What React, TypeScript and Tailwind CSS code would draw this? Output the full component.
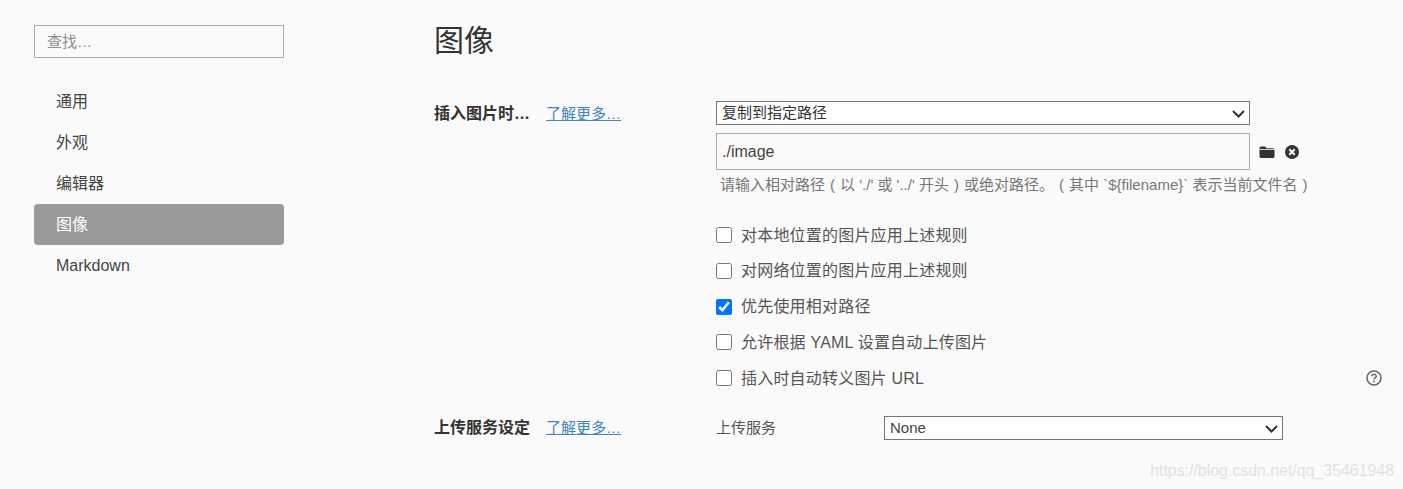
import React from "react";

const font = { fontFamily: '"Liberation Sans", "Noto Sans CJK SC", sans-serif' };

const nav = ["通用", "外观", "编辑器", "图像", "Markdown"];
const checks: [string, boolean][] = [
  ["对本地位置的图片应用上述规则", false],
  ["对网络位置的图片应用上述规则", false],
  ["优先使用相对路径", true],
  ["允许根据 YAML 设置自动上传图片", false],
  ["插入时自动转义图片 URL", false],
];

function Folder() {
  return (
    <svg width="16" height="14" viewBox="0 0 16 14" className="block">
      <path d="M0.5 3 Q0.5 1.5 2 1.5 H6 L7.5 3.2 H14 Q15.5 3.2 15.5 4.7 V11.5 Q15.5 13 14 13 H2 Q0.5 13 0.5 11.5 Z" fill="#333" />
      <rect x="0.5" y="4.2" width="15" height="0.8" fill="#fafafa" />
    </svg>
  );
}

function CloseCircle() {
  return (
    <svg width="14" height="14" viewBox="0 0 14 14" className="block">
      <circle cx="7" cy="7" r="7" fill="#333" />
      <path d="M4.3 4.3 L9.7 9.7 M9.7 4.3 L4.3 9.7" stroke="#fafafa" strokeWidth="2.2" />
    </svg>
  );
}

function Help() {
  return (
    <svg width="16" height="16" viewBox="0 0 16 16" className="block" fill="none">
      <circle cx="8" cy="8" r="7" stroke="#666" strokeWidth="1.5" />
      <path d="M5.9 6.3 C5.9 3.6 10.2 3.7 10.2 6.2 C10.2 7.8 8 7.8 8 9.5" stroke="#666" strokeWidth="1.5" />
      <circle cx="8" cy="11.5" r="0.9" fill="#666" />
    </svg>
  );
}

function Chevron() {
  return (
    <svg width="13" height="8" viewBox="0 0 13 8" fill="none" className="pointer-events-none absolute top-[9px] right-[5px]">
      <path d="M1 1 L6.5 6.5 L12 1" stroke="#333" strokeWidth="2" />
    </svg>
  );
}

function Learn() {
  return <a className="text-[15px] leading-[20px] text-[#4183c4] underline" href="#">了解更多…</a>;
}

function Paren({ c }: { c: string }) {
  return <span className="inline-block w-[1em] text-center">{c}</span>;
}

export default function App() {
  return (
    <div className="relative flex h-[489px] w-[1403px] overflow-hidden bg-[#fafafa] text-[#333]" style={font}>
      <aside className="ml-[34px] w-[250px] shrink-0 pt-[25px]">
        <input
          readOnly
          placeholder="查找…"
          className="block h-[33px] w-full border border-[#aaa] bg-[#fafafa] px-3 text-[15px] outline-none placeholder:text-[#8a8a8a]"
        />
        <ul className="mt-[23px]">
          {nav.map((n) => (
            <li
              key={n}
              className={
                "flex h-[41px] items-center rounded-[4px] pl-[22px] text-[16px] " +
                (n === "图像" ? "bg-[#999] text-white" : "text-[#444]")
              }
            >
              {n}
            </li>
          ))}
        </ul>
      </aside>

      <main className="ml-[150px] flex-1 pr-[20px]">
        <h1 className="mt-[21px] h-[40px] text-[30px] leading-[40px] font-normal text-[#333]">图像</h1>

        <section className="mt-[40px] flex">
          <div className="flex h-[24px] w-[282px] shrink-0 items-center pt-[1px]">
            <span className="w-[112px] text-[16px] font-bold text-[#333]">插入图片时…</span>
            <Learn />
          </div>
          <div className="flex-1">
            <div className="relative w-[534px]">
              <select className="block h-[24px] w-full appearance-none border border-[#767676] bg-white pl-[5px] text-[15px] text-[#333]">
                <option>复制到指定路径</option>
              </select>
              <Chevron />
            </div>
            <div className="mt-[8px] flex items-center">
              <input
                readOnly
                value="./image"
                className="block h-[37px] w-[534px] border border-[#aaa] bg-[#fafafa] px-[5px] text-[16px] text-[#444] outline-none"
              />
              <span className="ml-[9px]"><Folder /></span>
              <span className="ml-[10px]"><CloseCircle /></span>
            </div>
            <p className="mt-[5px] pl-[4px] text-[15px] leading-[20px] whitespace-nowrap text-[#777]">
              请输入相对路径<Paren c="(" />以 './' 或 '../' 开头<Paren c=")" />或绝对路径。<Paren c="(" />其中 `${"{filename}"}` 表示当前文件名<Paren c=")" />
            </p>
            <div className="relative mt-[30px] flex flex-col gap-[15.75px]">
              {checks.map(([t, c]) => (
                <label key={t} className="flex h-[20px] items-center text-[16px] tracking-[0.2px] text-[#555]">
                  <input type="checkbox" readOnly checked={c} className="m-0 h-4 w-4 accent-[#0075ff]" />
                  <span className="ml-[9px] pt-[1px]">{t}</span>
                </label>
              ))}
              <span className="absolute right-[1px] bottom-[2px]"><Help /></span>
            </div>
          </div>
        </section>

        <section className="mt-[28px] flex">
          <div className="flex h-[24px] w-[282px] shrink-0 items-center">
            <span className="w-[112px] text-[16px] font-bold text-[#333]">上传服务设定</span>
            <Learn />
          </div>
          <div className="flex h-[24px] items-center">
            <span className="w-[168px] text-[15px] text-[#555]">上传服务</span>
            <div className="relative w-[399px]">
              <select className="block h-[24px] w-full appearance-none border border-[#767676] bg-white pb-[4px] pl-[5px] text-[15px] text-[#444]">
                <option>None</option>
              </select>
              <Chevron />
            </div>
          </div>
        </section>
      </main>

      <span className="absolute right-[9px] bottom-[8px] text-[15.9px] leading-[20px] text-[#e2e2e2]">
        https://blog.csdn.net/qq_35461948
      </span>
    </div>
  );
}
